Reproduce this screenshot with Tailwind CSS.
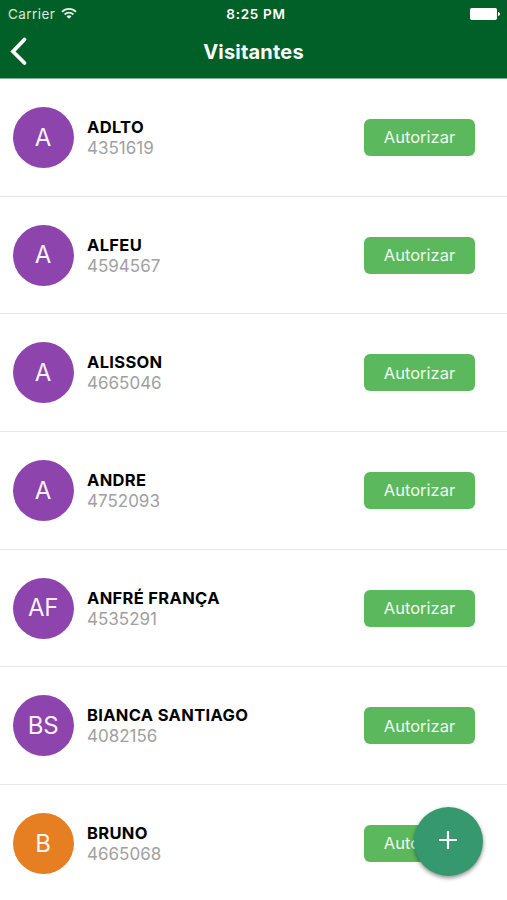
<!DOCTYPE html>
<html lang="pt-BR">
<head>
<meta charset="utf-8">
<meta name="viewport" content="width=device-width, initial-scale=1">
<title>Visitantes</title>
<script src="https://cdn.jsdelivr.net/npm/@tailwindcss/browser@4"></script>
</head>
<body class="relative h-[900px] overflow-hidden bg-white font-['Inter','Liberation_Sans',sans-serif]">
<header class="h-[79px] border-b border-[#7fae90] bg-[#006027] text-white">
  <div class="grid h-7 grid-cols-3 items-center pr-[7px] pl-2 text-[13.5px] leading-7">
    <div class="flex items-center gap-[6px]">
      <span class="tracking-[0.45px] text-[#d7eadc]">Carrier</span>
      <svg class="mb-[2px] h-[11px] w-[16px]" viewBox="0 0 16 11" fill="none" stroke="#e4f3e8" stroke-width="1.8"><path d="M1 3.8a10 10 0 0 1 14 0M3.6 6.5a6.3 6.3 0 0 1 8.8 0"/><path d="M8 10.8 5.5 8.5a3.6 3.6 0 0 1 5 0z" fill="#e4f3e8" stroke="none"/></svg>
    </div>
    <span class="pl-1 text-center font-semibold tracking-[0.7px] whitespace-nowrap">8:25 PM</span>
    <svg class="h-3 w-[30px] justify-self-end" viewBox="0 0 30 12" fill="white"><rect width="27" height="12" rx="1.8"/><path d="M28 4c2.7.5 2.7 3.500 0 4z"/></svg>
  </div>
  <div class="grid h-[47px] grid-cols-[80px_1fr_80px] items-center">
    <svg class="mb-[2px] ml-[9px] h-[30px] w-[20px]" viewBox="0 0 20 30" fill="none" stroke="white" stroke-width="3.8" stroke-linecap="round" stroke-linejoin="miter"><path d="M15.500 3.500 4 15.500 15.500 27"/></svg>
    <h1 class="text-center text-[20px] font-bold tracking-[0.2px]">Visitantes</h1>
  </div>
</header>
<main id="list"></main>
<button aria-label="Adicionar" class="absolute top-[807px] left-[414px] flex size-[69px] items-center justify-center rounded-full bg-[#36986f] shadow-[0_2px_4px_rgba(0,0,0,0.45)]">
  <svg class="mr-[2px] mb-[3px] size-[18px]" viewBox="0 0 18 18" stroke="white" stroke-width="2.200"><path d="M9 0v18M0 9h18"/></svg>
</button>
<script>
const visitors = [
  ['A', 'ADLTO', '4351619'], ['A', 'ALFEU', '4594567'], ['A', 'ALISSON', '4665046'],
  ['A', 'ANDRE', '4752093'], ['AF', 'ANFRÉ FRANÇA', '4535291'],
  ['BS', 'BIANCA SANTIAGO', '4082156'], ['B', 'BRUNO', '4665068']
];
document.getElementById('list').innerHTML = visitors.map(([initials, name, id]) => `
  <div class="flex h-[117.67px] items-center border-b border-[#e6e6e6] pt-[0.6px] pr-8 pl-[13px]">
    <div class="flex size-[61px] shrink-0 items-center justify-center rounded-full pr-px text-[24px] tracking-[-0.3px] text-white/95 ${name === 'BRUNO' ? 'bg-[#e67e22]' : 'bg-[#8e44ad]'}">${initials}</div>
    <div class="ml-[13px] flex-1 pt-px">
      <div class="text-[16.5px] leading-[21px] font-bold tracking-[0.33px] text-black">${name}</div>
      <div class="text-[17px] leading-[21px] text-[#a0a0a0]">${id}</div>
    </div>
    <button class="h-[37px] w-[111px] rounded-[6px] bg-[#5cb85c] text-[16.5px] text-white/90">Autorizar</button>
  </div>`).join('');
</script>
</body>
</html>
